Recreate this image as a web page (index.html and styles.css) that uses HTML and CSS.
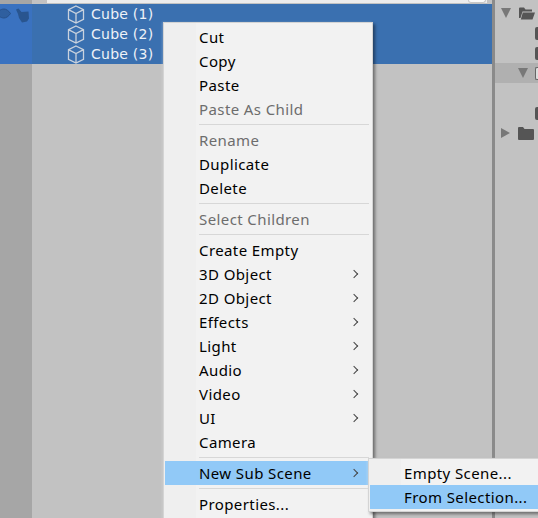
FILE: index.html
```html
<!DOCTYPE html>
<html lang="en">

<head>
    <meta charset="UTF-8" />
    <title>Hierarchy menu</title>
    <link rel="stylesheet" href="styles.css">
</head>

<body>
    <div class="editor">
        <div class="hierarchy">
            <div class="top-strip">
                <div class="top-strip-dark"></div>
                <div class="top-strip-light"><div class="search-end"></div></div>
            </div>
            <div class="rows">
                <div class="gutter">
                    <svg class="eye" width="11" height="11" viewBox="0 0 11 11"><path d="M-4 5.500C-1 2 2 1 4 1s4.500 1.500 6.500 4.500C8.500 8.500 6 10 4 10s-5-1-8-4.500z" fill="#2f5f9f" stroke="#28518a"/></svg>
                    <svg class="hand" width="15" height="15" viewBox="0 0 15 15"><path d="M1 1.500l2.500-1L6.500 4l7-.5.500 7-2 3-5 1-3-4.500-1-4z" fill="#29558f"/></svg>
                </div>
                <div class="row-list">
                    <div class="row"><svg class="cube" width="18" height="19" viewBox="0 0 18 19"><path d="M9 1l7.500 3.700v9.600L9 18l-7.500-3.700V4.700zM1.500 4.700L9 8.500l7.500-3.800M9 8.500V18" fill="none" stroke="#c9d2de" stroke-width="1.300"/></svg><span>Cube (1)</span></div>
                    <div class="row"><svg class="cube" width="18" height="19" viewBox="0 0 18 19"><path d="M9 1l7.500 3.700v9.600L9 18l-7.500-3.700V4.700zM1.500 4.700L9 8.500l7.500-3.800M9 8.500V18" fill="none" stroke="#c9d2de" stroke-width="1.300"/></svg><span>Cube (2)</span></div>
                    <div class="row"><svg class="cube" width="18" height="19" viewBox="0 0 18 19"><path d="M9 1l7.500 3.700v9.600L9 18l-7.500-3.700V4.700zM1.500 4.700L9 8.500l7.500-3.800M9 8.500V18" fill="none" stroke="#c9d2de" stroke-width="1.300"/></svg><span>Cube (3)</span></div>
                </div>
            </div>
        </div>
        <div class="project">
            <div class="folder-row">
                <span class="tri-down"></span>
                <svg class="folder" width="17" height="13" viewBox="0 0 17 13"><path d="M1 1.500Q1 .5 2 .5h4l1.500 2H14v2H4.500L2.500 11H1zM4.800 5.500H17L14.500 12.500H2.800z" fill="#555"/></svg>
            </div>
            <div class="folder-row"><span class="clip"></span></div>
            <div class="folder-row"><span class="clip"></span></div>
            <div class="folder-row sel"><span class="tri-down"></span><span class="clip hollow"></span></div>
            <div class="folder-row"></div>
            <div class="folder-row"><span class="clip"></span></div>
            <div class="folder-row">
                <span class="tri-right"></span>
                <svg class="folder" width="16" height="13" viewBox="0 0 16 13"><path d="M0 1Q0 0 1 0h4l1.500 2H15q1 0 1 1v9q0 1-1 1H1q-1 0-1-1z" fill="#555"/></svg>
            </div>
        </div>
    </div>

    <ul class="menu main-menu">
        <li>Cut</li>
        <li>Copy</li>
        <li>Paste</li>
        <li class="off">Paste As Child</li>
        <li class="sep"></li>
        <li class="off">Rename</li>
        <li>Duplicate</li>
        <li>Delete</li>
        <li class="sep"></li>
        <li class="off">Select Children</li>
        <li class="sep"></li>
        <li>Create Empty</li>
        <li class="sub">3D Object</li>
        <li class="sub">2D Object</li>
        <li class="sub">Effects</li>
        <li class="sub">Light</li>
        <li class="sub">Audio</li>
        <li class="sub">Video</li>
        <li class="sub">UI</li>
        <li>Camera</li>
        <li class="sep"></li>
        <li class="sub hot">New Sub Scene</li>
        <li class="sep"></li>
        <li>Properties...</li>
    </ul>

    <ul class="menu sub-menu">
        <li>Empty Scene...</li>
        <li class="hot">From Selection...</li>
    </ul>
</body>

</html>
```

FILE: styles.css
```css
html,
body {
    margin: 0;
    height: 100%;
    overflow: hidden;
}

body {
    position: relative;
    background-color: #c2c2c2;
    font-family: "Noto Sans", sans-serif;
}

.editor {
    display: flex;
    height: 518px;
}

.hierarchy {
    width: 492px;
    height: 100%;
    background: linear-gradient(to right, #a6a6a6 32px, #c2c2c2 32px);
    border-right: 3px solid #8a8a8a;
}

.top-strip {
    display: flex;
    height: 4px;
}

.top-strip-dark {
    width: 47px;
}

.top-strip-light {
    width: 440px;
    height: 3px;
    background-color: #ececec;
    display: flex;
    justify-content: flex-end;
}

.search-end {
    width: 18px;
    height: 3px;
    background-color: #fafafa;
    border: solid #c8c8c8;
    border-width: 0 1px 1px;
    border-radius: 0 0 3px 3px;
    box-sizing: border-box;
    margin-right: 1px;
}

.rows {
    display: flex;
    height: 60px;
    background-color: #3a70b0;
}

.gutter {
    width: 32px;
    background-color: #3a72c0;
    display: flex;
    gap: 4px;
    align-items: flex-start;
    padding-top: 4px;
    box-sizing: border-box;
}

.row-list {
    flex: 1;
}

.row {
    height: 20px;
    display: flex;
    align-items: center;
    gap: 6px;
    padding-left: 35px;
    color: #eef2f7;
    font-family: "DejaVu Sans", sans-serif;
    font-size: 14px;
    letter-spacing: 0.25px;
}

.project {
    flex: 1;
    padding-top: 3px;
}

.folder-row {
    height: 20px;
    display: flex;
    align-items: center;
    gap: 7px;
    padding-left: 6px;
}

.folder-row.sel {
    background-color: #b0b0b0;
    padding-left: 23px;
}

.clip {
    margin-left: auto;
    width: 3px;
    height: 13px;
    background-color: #555;
    border-radius: 2px 0 0 2px;
}

.clip.hollow {
    background-color: #ddd;
    border: 1px solid #666;
    border-right: 0;
    box-sizing: border-box;
}

.tri-down {
    width: 0;
    height: 0;
    border-left: 5px solid transparent;
    border-right: 5px solid transparent;
    border-top: 10px solid #787878;
}

.tri-right {
    width: 0;
    height: 0;
    margin-right: 1px;
    border-top: 5px solid transparent;
    border-bottom: 5px solid transparent;
    border-left: 9px solid #787878;
}

.menu {
    position: absolute;
    margin: 0;
    padding: 0;
    list-style: none;
    box-sizing: border-box;
    background: linear-gradient(to right, #efefef 32px, #f2f2f2 32px);
    border: 1px solid #d4d4d4;
    box-shadow: 2px 2px 3px rgba(0, 0, 0, 0.45), -1px 0 2px rgba(255, 255, 255, 0.25);
    color: #000;
    font-size: 15px;
    letter-spacing: 0.4px;
}

.main-menu {
    left: 163px;
    top: 22px;
    width: 210px;
    padding: 2px 1px;
}

.sub-menu {
    left: 368px;
    top: 458px;
    width: 175px;
    padding: 2px 1px;
}

.menu li {
    position: relative;
    height: 24px;
    line-height: 24px;
    padding-left: 34px;
}

.menu .off {
    color: #6d6d6d;
}

.menu .hot {
    background-color: #91c9f7;
}

.menu .sep {
    height: 1px;
    margin: 3px 2px 3px 34px;
    padding: 0;
    background-color: #d7d7d7;
}

.menu .sub::after {
    content: "";
    position: absolute;
    right: 14px;
    top: 9px;
    width: 5px;
    height: 5px;
    border-top: 1px solid #444;
    border-right: 1px solid #444;
    transform: rotate(45deg);
}
```
